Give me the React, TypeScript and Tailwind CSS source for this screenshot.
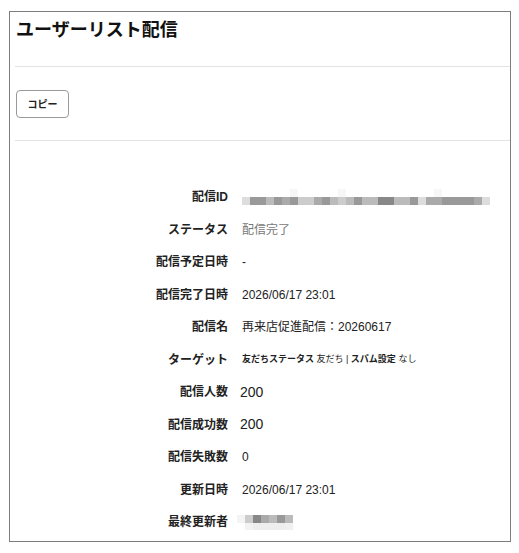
import React from "react";

const idBlocks = [
  "bg-[#dddddd]", "bg-[#999999]", "bg-[#9a9a9a]", "bg-[#bbbbbb]", "bg-[#999999]", "bg-[#aaaaaa]",
  "bg-[#999999]", "bg-[#cccccc]", "bg-[#cccccc]", "bg-[#aaaaaa]", "bg-[#999999]", "bg-[#bbbbbb]",
  "bg-[#cccccc]", "bg-[#bbbbbb]", "bg-[#999999]", "bg-[#bbbbbb]", "bg-[#bbbbbb]", "bg-[#888888]",
  "bg-[#888888]", "bg-[#bbbbbb]", "bg-[#bbbbbb]", "bg-[#999999]", "bg-[#dddddd]", "bg-[#aaaaaa]",
  "bg-[#aaaaaa]", "bg-[#999999]", "bg-[#999999]", "bg-[#999999]", "bg-[#999999]", "bg-[#aaaaaa]",
  "bg-[#dddddd]",
];
const idTop = [
  "bg-white", "bg-white", "bg-white", "bg-white", "bg-white", "bg-white", "bg-[#f6f6f6]",
  "bg-white", "bg-white", "bg-white", "bg-white", "bg-white", "bg-[#f7f7f7]", "bg-white",
  "bg-white", "bg-white", "bg-white", "bg-white", "bg-white", "bg-white", "bg-white",
  "bg-white", "bg-white", "bg-white", "bg-[#f7f7f7]", "bg-white", "bg-white", "bg-white",
  "bg-white", "bg-white", "bg-white",
];
const userTop = ["bg-[#f4f4f4]", "bg-[#cccccc]", "bg-[#888888]", "bg-[#aaaaaa]", "bg-[#bbbbbb]", "bg-[#999999]", "bg-[#bbbbbb]"];
const userBottom = ["bg-white", "bg-[#f3f3f3]", "bg-[#eeeeee]", "bg-[#eeeeee]", "bg-[#eeeeee]", "bg-[#eeeeee]", "bg-[#f0f0f0]"];

function Row({ label, children }: { label: string; children: React.ReactNode }) {
  return (
    <div className="flex h-[32.5px] items-center">
      <div className="w-[218px] shrink-0 text-right text-[12px] font-bold text-[#222]">{label}</div>
      <div className="ml-[14px] flex items-center text-[12px] text-[#222]">{children}</div>
    </div>
  );
}

export default function App() {
  return (
    <div
      className="h-[553px] w-[519px] bg-white pl-[9px] pt-[11px]"
      style={{ fontFamily: '"Liberation Sans", "Noto Sans CJK JP", sans-serif' }}
    >
      <div className="flex h-[531px] w-[502px] flex-col border border-[#7d7d7d] pl-[5px]">
        <div className="pl-[1px] pt-[4px] text-[18px] font-bold leading-[28px] text-[#111]">ユーザーリスト配信</div>
        <div className="mt-[22px] h-px bg-[#e3e3e3]" />
        <div className="pt-[23px] pl-[1px]">
          <button className="flex h-[28px] w-[53px] items-center justify-center rounded-[4px] border border-[#9a9a9a] bg-white text-[10px] font-bold text-[#222]">
            コピー
          </button>
        </div>
        <div className="mt-[22px] h-px bg-[#e3e3e3]" />
        <div className="-ml-[5px] pt-[40px]">
          <Row label="配信ID">
            <div className="flex flex-col">
              <div className="flex h-[8px]">
                {idTop.map((c, i) => (
                  <div key={i} className={`h-[8px] w-[8px] ${c}`} />
                ))}
              </div>
              <div className="flex h-[8px]">
                {idBlocks.map((c, i) => (
                  <div key={i} className={`h-[8px] w-[8px] ${c}`} />
                ))}
              </div>
            </div>
          </Row>
          <Row label="ステータス">
            <span className="text-[#777]">配信完了</span>
          </Row>
          <Row label="配信予定日時">
            <span>-</span>
          </Row>
          <Row label="配信完了日時">
            <span>2026/06/17 23:01</span>
          </Row>
          <Row label="配信名">
            <span>再来店促進配信：20260617</span>
          </Row>
          <Row label="ターゲット">
            <span className="text-[9px]">
              <span className="font-bold">友だちステータス</span> 友だち | <span className="font-bold">スパム設定</span> なし
            </span>
          </Row>
          <Row label="配信人数">
            <span className="-ml-[2px] text-[14px]">200</span>
          </Row>
          <Row label="配信成功数">
            <span className="-ml-[2px] text-[14px]">200</span>
          </Row>
          <Row label="配信失敗数">
            <span>0</span>
          </Row>
          <Row label="更新日時">
            <span>2026/06/17 23:01</span>
          </Row>
          <Row label="最終更新者">
            <div className="-ml-[5px] flex flex-col">
              <div className="flex">
                {userTop.map((c, i) => (
                  <div key={i} className={`h-[8px] w-[8px] ${c}`} />
                ))}
              </div>
              <div className="flex">
                {userBottom.map((c, i) => (
                  <div key={i} className={`h-[7px] w-[8px] ${c}`} />
                ))}
              </div>
            </div>
          </Row>
        </div>
      </div>
    </div>
  );
}
